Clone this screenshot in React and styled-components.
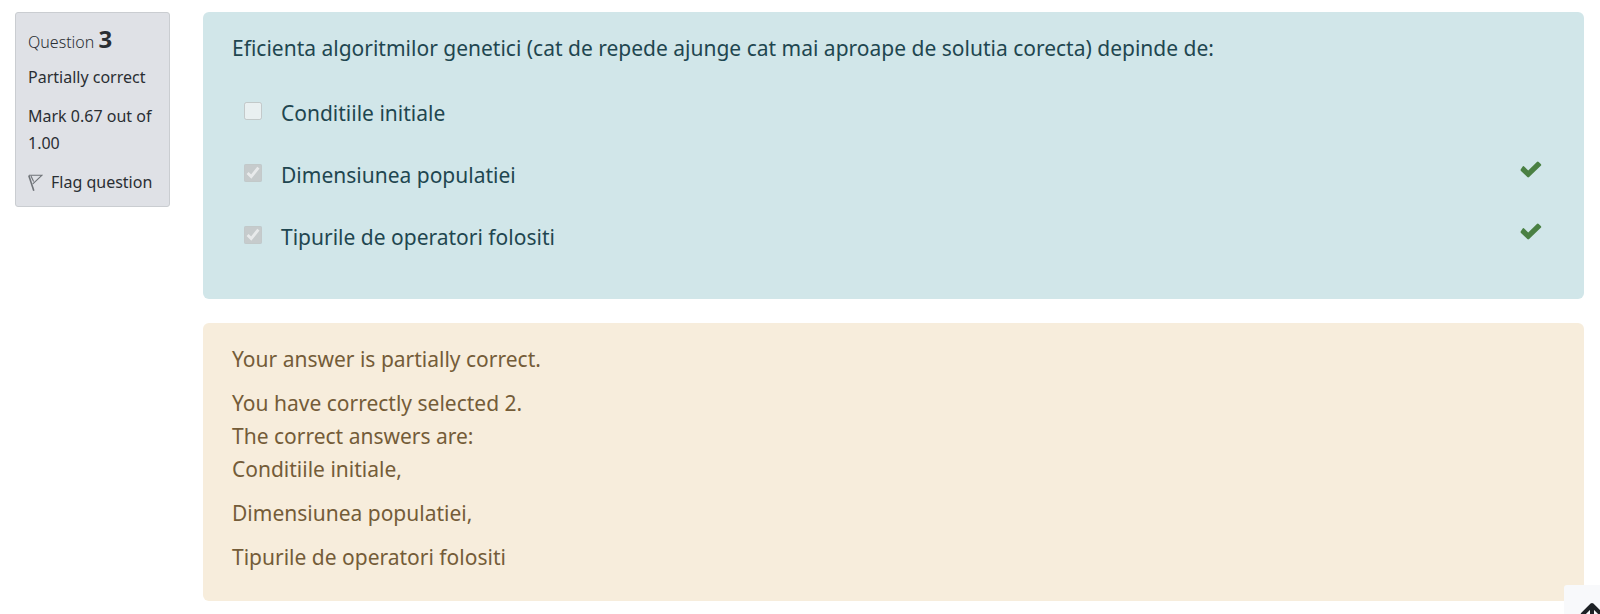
import React from "react";
import styled, { createGlobalStyle } from "styled-components";

const GlobalStyle = createGlobalStyle`
  *, *::before, *::after { box-sizing: border-box; }
  body {
    margin: 0;
    background: #fff;
    color: #2a2e33;
    font-family: "Segoe UI", "Noto Sans", sans-serif;
    overflow-x: hidden;
  }
  p, h3, h4, fieldset { margin: 0; padding: 0; border: 0; }
`;

const Question = styled.main`
  display: flex;
  align-items: flex-start;
  gap: 33px;
  padding: 12px 16px 12px 15px;
`;

const Info = styled.aside`
  flex: 0 0 155px;
  display: flex;
  flex-direction: column;
  align-items: flex-start;
  gap: 12px;
  padding: 14px 0 10px 12px;
  border: 1px solid #cacdd1;
  border-radius: 3px;
  background: #dfe1e6;
  font-size: 16px;
  line-height: 27px;
`;

const Number = styled.h3`
  margin-bottom: -4px;
  font-size: 16px;
  font-weight: 300;
  line-height: 27px;
`;

const Digit = styled.span`
  font-size: 24px;
  font-weight: 700;
  line-height: 24px;
`;

const FlagButton = styled.button`
  display: flex;
  align-items: center;
  gap: 8px;
  padding: 0;
  border: 0;
  background: none;
  color: inherit;
  font: inherit;
  white-space: nowrap;
  cursor: pointer;
`;

const Content = styled.div`
  flex: 1;
  min-width: 0;
  display: flex;
  flex-direction: column;
  gap: 24px;
  font-size: 21px;
  line-height: 33px;
`;

const Panel = styled.section`
  padding: 20px 29px 27px;
  border-radius: 6px;
  background: ${(p) => p.$background};
  color: ${(p) => p.$color};
`;

const Answers = styled.fieldset`
  display: flex;
  flex-direction: column;
  gap: 29px;
  margin: 32px 13px 18px 12px;
`;

const Answer = styled.div`
  display: flex;
  align-items: center;
  justify-content: space-between;
`;

const AnswerLabel = styled.label`
  display: flex;
  align-items: center;
  gap: 19px;
`;

const Checkbox = styled.input`
  width: 18px;
  height: 18px;
  margin: 0 0 6px;
`;

const Tick = styled.svg`
  width: 22px;
  height: 17px;
  margin-bottom: 12px;
  fill: #4a8043;
`;

const Feedback = styled.div`
  display: flex;
  flex-direction: column;
  gap: 11px;
`;

const ScrollTop = styled.button`
  position: fixed;
  right: -20px;
  bottom: -26px;
  width: 56px;
  height: 55px;
  display: grid;
  place-items: center;
  padding: 0;
  border: 0;
  border-radius: 3px;
  background: #f8f9fb;
  color: #1d2125;
`;

const answers = [
  { text: "Conditiile initiale", checked: false },
  { text: "Dimensiunea populatiei", checked: true },
  { text: "Tipurile de operatori folositi", checked: true },
];

export default function App() {
  return (
    <>
      <GlobalStyle />
      <Question>
        <Info>
          <Number>
            Question <Digit>3</Digit>
          </Number>
          <p>Partially correct</p>
          <p>Mark 0.67 out of 1.00</p>
          <FlagButton type="button">
            <svg width="15" height="18" viewBox="0 0 15 18" fill="none" stroke="#6f7378" aria-hidden="true">
              <path d="M.8 1.5 L5.8 16.8" strokeWidth="1.6" />
              <path d="M1 1.3 H13.8 L4.8 9.8 M3 2 L5.6 7.4" strokeWidth="1.1" />
            </svg>
            Flag question
          </FlagButton>
        </Info>
        <Content>
          <Panel $background="#d1e6e9" $color="#1f4650">
            <p>
              Eficienta algoritmilor genetici (cat de repede ajunge cat mai aproape de solutia corecta) depinde de:
            </p>
            <Answers>
              {answers.map(({ text, checked }) => (
                <Answer key={text}>
                  <AnswerLabel>
                    <Checkbox type="checkbox" checked={checked} disabled readOnly />
                    {text}
                  </AnswerLabel>
                  {checked && (
                    <Tick viewBox="0 0 22 17" role="img" aria-label="Correct">
                      <path d="M3.9 5.2 L8.2 9.4 L16.9 .9 Q17.8 .1 18.7 .9 L20.8 3 Q21.7 3.9 20.8 4.8 L9.1 16 Q8.2 16.8 7.3 16 L1 9.9 Q.1 9 1 8.1 L2.5 5.8 Q3.2 4.6 3.9 5.2Z" />
                    </Tick>
                  )}
                </Answer>
              ))}
            </Answers>
          </Panel>
          <Panel $background="#f7eddc" $color="#745c38">
            <Feedback>
              <p>Your answer is partially correct.</p>
              <p>
                You have correctly selected 2.
                <br />
                The correct answers are:
                <br />
                Conditiile initiale,
              </p>
              <p>Dimensiunea populatiei,</p>
              <p>Tipurile de operatori folositi</p>
            </Feedback>
          </Panel>
        </Content>
      </Question>
      <ScrollTop type="button" aria-label="Back to top">
        <svg width="24" height="22" viewBox="0 0 24 22" fill="none" stroke="currentColor" strokeWidth="4" strokeLinejoin="round" aria-hidden="true">
          <path d="M2 13 L12 3 L22 13 M12 4 V21" />
        </svg>
      </ScrollTop>
    </>
  );
}
